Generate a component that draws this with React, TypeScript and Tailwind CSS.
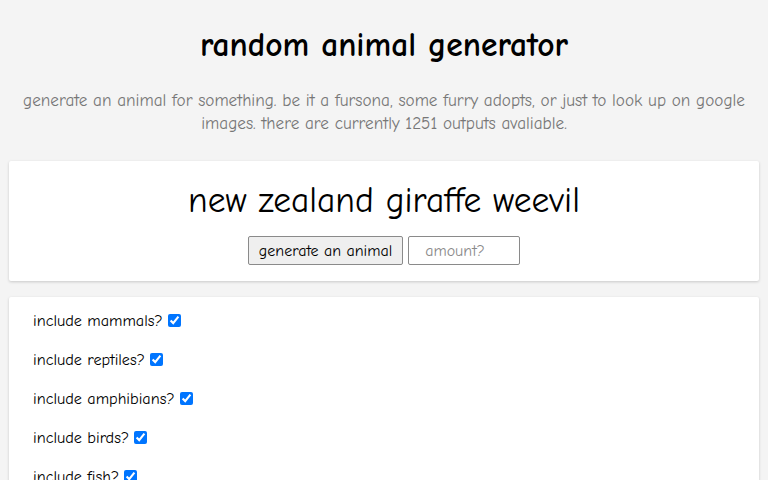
import React, { useState } from 'react';

const categories = ['mammals', 'reptiles', 'amphibians', 'birds', 'fish', 'insects'];

const App: React.FC = () => {
  const [amount, setAmount] = useState('');

  return (
    <div
      className="min-h-screen bg-[#f4f4f4] px-[9px] text-black"
      style={{ fontFamily: '"Comic Sans MS", "Comic Neue", Lato, sans-serif' }}
    >
      <h1 className="pt-[24px] text-center text-[33.5px] font-bold leading-[42px]">random animal generator</h1>
      <p className="mt-[23px] text-center text-[17.2px] leading-[23px] text-[#777777]">
        generate an animal for something. be it a fursona, some furry adopts, or just to look up on google
        <br />
        images. there are currently 1251 outputs avaliable.
      </p>

      <div className="mt-[26px] flex flex-col items-center rounded-[2px] bg-white pt-[19px] pb-[16px] shadow-[0_1px_3px_rgba(0,0,0,0.18)]">
        <h2 className="text-[35.5px] leading-[42px]">new zealand giraffe weevil</h2>
        <div className="mt-[14px] flex items-center gap-[5px]">
          <button className="h-[29px] rounded-[2px] border border-[#8a8a8a] bg-[#efefef] px-[10px] text-[16px] leading-none">
            generate an animal
          </button>
          <input
            value={amount}
            onChange={e => setAmount(e.target.value)}
            placeholder="amount?"
            className="h-[29px] w-[112px] rounded-[2px] border border-[#8a8a8a] bg-white px-[16px] text-[16px] placeholder:text-[#8a8a8a] outline-none"
          />
        </div>
      </div>

      <div className="mt-[16px] rounded-[2px] bg-white px-[24px] pt-[4px] pb-[16px] shadow-[0_1px_3px_rgba(0,0,0,0.18)]">
        {categories.map(c => (
          <label key={c} className="flex h-[39px] items-center text-[16.2px] leading-[23px]">
            include {c}?
            <input type="checkbox" defaultChecked className="ml-[5px] h-[13px] w-[13px] accent-[#0075ff]" />
          </label>
        ))}
      </div>
    </div>
  );
};

export default App;
